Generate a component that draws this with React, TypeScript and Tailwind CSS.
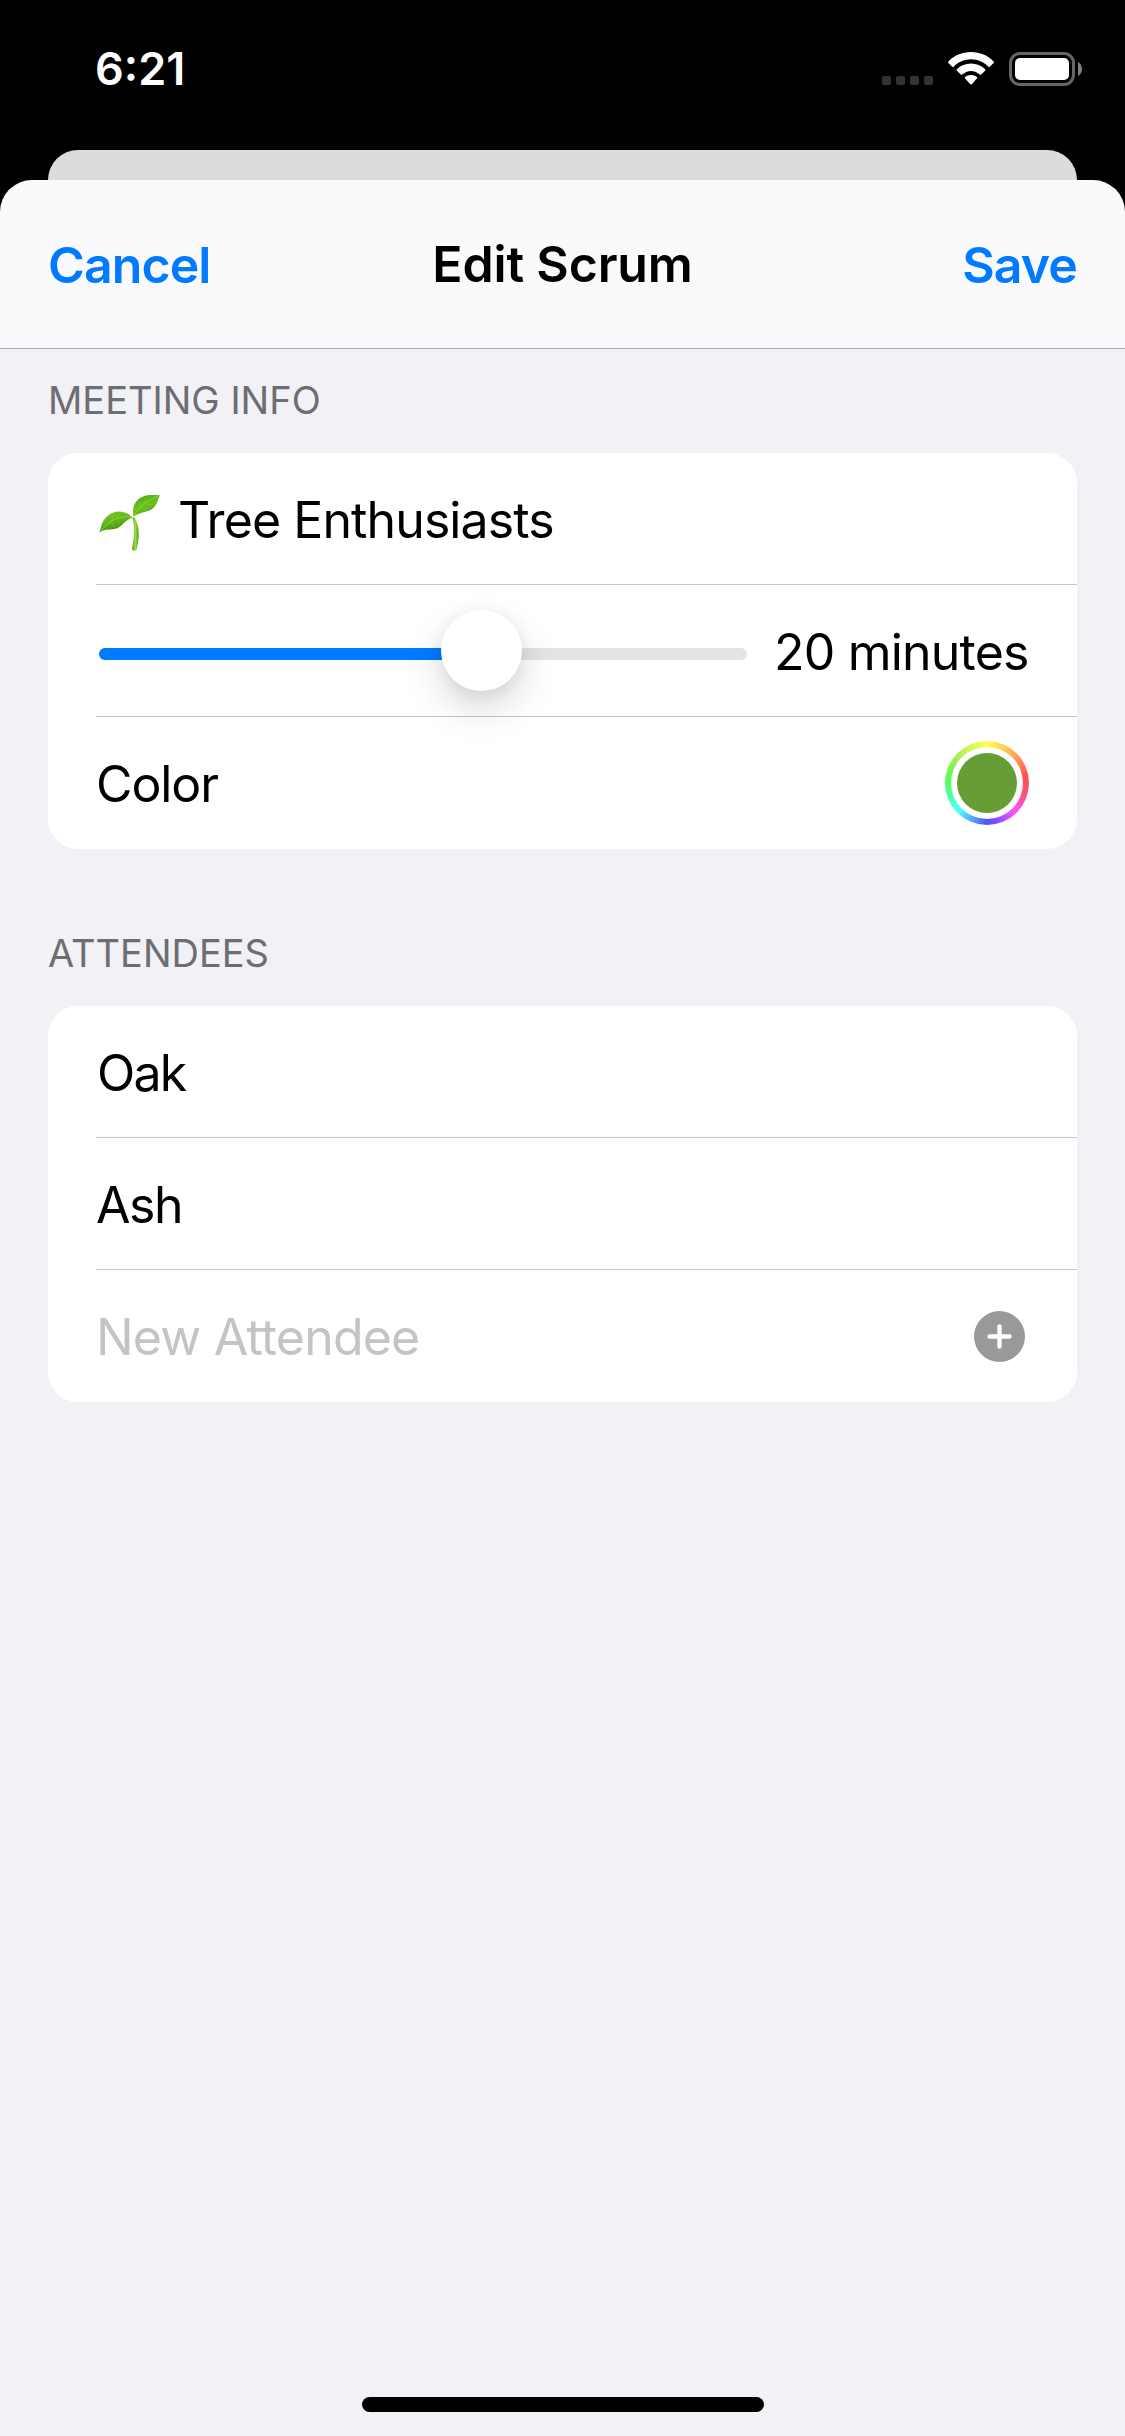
import type { ReactNode } from "react";

function StatusBar() {
  return (
    <div className="flex h-[137px] items-center justify-between pl-[95px] pr-[43px]">
      <span className="text-[45px] leading-none font-semibold text-white">6:21</span>
      <div className="flex items-center">
        <div className="mt-[24px] mr-[15px] flex gap-[5px]">
          {[0, 1, 2, 3].map((i) => (
            <span key={i} className="size-[9px] rounded-[2px] bg-[#333333]" />
          ))}
        </div>
        <svg className="mr-[15px] h-[34px] w-[46px]" viewBox="0 0 46 34" fill="#fff">
          <path d="M23 0C32 0 40 3.5 45.6 9.4C46.1 9.9 46.1 10.5 45.6 11L41.8 14.7C41.3 15.1 40.8 15.1 40.4 14.7C35.8 10 29.6 7.3 23 7.3S10.2 10 5.6 14.7C5.2 15.1 4.7 15.1 4.2 14.7L.4 11C-.1 10.5-.1 9.9.4 9.4C6 3.5 14 0 23 0Z" />
          <path d="M23 11.5C28.5 11.5 33.4 13.6 37.1 17.2C37.6 17.7 37.6 18.3 37.1 18.8L33.2 22.6C32.8 23 32.3 23 31.8 22.6C29.4 20.3 26.3 18.9 23 18.9S16.6 20.3 14.2 22.6C13.7 23 13.2 23 12.8 22.6L8.9 18.8C8.4 18.3 8.4 17.7 8.9 17.2C12.6 13.6 17.5 11.5 23 11.5Z" />
          <path d="M23 23C25.3 23 27.3 23.8 28.9 25.1C29.4 25.6 29.4 26.1 28.9 26.6L23.7 32.2C23.2 32.7 22.8 32.7 22.3 32.2L17.1 26.6C16.6 26.1 16.6 25.6 17.1 25.1C18.7 23.8 20.7 23 23 23Z" />
        </svg>
        <div className="h-[34px] w-[66px] rounded-[11px] border-3 border-[#666666] p-[3px]">
          <div className="h-full w-full rounded-[5px] bg-white" />
        </div>
        <svg className="ml-[3px] h-[14px] w-1" viewBox="0 0 4 14" fill="#808080">
          <path d="M0 0C2.4 1.2 4 3.8 4 7S2.4 12.8 0 14Z" />
        </svg>
      </div>
    </div>
  );
}

function Seedling() {
  return (
    <svg className="mt-[9px] mr-[10px] -ml-1 size-[76px]" viewBox="0 0 228 228">
      <defs>
        <linearGradient id="leafLeft" x1="0" y1="0" x2="0.4" y2="1">
          <stop offset="0" stopColor="#7fce28" />
          <stop offset="0.55" stopColor="#5fb618" />
          <stop offset="1" stopColor="#3d8c0d" />
        </linearGradient>
        <linearGradient id="leafRight" x1="0.2" y1="0" x2="0.7" y2="1">
          <stop offset="0" stopColor="#4fab11" />
          <stop offset="0.5" stopColor="#6cc01d" />
          <stop offset="1" stopColor="#4a9c10" />
        </linearGradient>
        <linearGradient id="stem" x1="0" y1="0" x2="1" y2="0">
          <stop offset="0" stopColor="#4a9a0d" />
          <stop offset="0.5" stopColor="#9be03f" />
          <stop offset="1" stopColor="#4a9e0e" />
        </linearGradient>
      </defs>
      <path d="M121 98C128 115 129 146 120 192C123 199 131 199 134 193C144 155 142 120 127 97Z" fill="url(#stem)" />
      <path d="M122 98C102 75 70 74 50 90C35 102 28 117 26 130L22 143C35 132 48 135 68 132C91 127 95 105 122 98Z" fill="url(#leafLeft)" />
      <path d="M125 95C119 68 128 45 152 35C166 29 184 30 204 31C197 42 198 56 184 69C168 84 143 80 125 95Z" fill="url(#leafRight)" />
      <path d="M120 97C87 91 55 101 28 137" fill="none" stroke="#a5df55" strokeWidth="2" />
      <path d="M126 93C140 65 163 47 199 33" fill="none" stroke="#a5df55" strokeWidth="2" />
      <path d="M58 107L66 91M75 99L82 86M57 110L68 126M76 101L84 117M142 68L143 48M157 55L162 38M143 69L163 75M160 54L181 61" stroke="#8bcf3c" strokeWidth="1.5" />
    </svg>
  );
}

function Section({ title, children }: { title: string; children: ReactNode }) {
  return (
    <section>
      <h2 className="flex h-[104px] items-center pb-[2px] text-[38px] leading-none text-[#6d6d72]">
        {title}
      </h2>
      <div className="rounded-[30px] bg-white pl-12">{children}</div>
    </section>
  );
}

function Row({ last = false, children }: { last?: boolean; children: ReactNode }) {
  return (
    <div className={last ? "flex h-[132px] items-center" : "flex h-[132px] items-center border-b border-[#c6c6c8]"}>
      {children}
    </div>
  );
}

function Slider() {
  return (
    <div className="relative ml-[3px] flex h-[81px] w-[648px] items-center">
      <div className="mt-[7px] h-3 w-full overflow-hidden rounded-full bg-[#e4e4e6]">
        <div className="h-full w-[382px] bg-[#007aff]" />
      </div>
      <div className="absolute top-0 left-[342px] size-[81px] rounded-full bg-white shadow-[0_18px_39px_rgba(0,0,0,0.15),0_3px_18px_rgba(0,0,0,0.07)]" />
    </div>
  );
}

function ColorWell() {
  return (
    <div className="mr-12 ml-auto size-[84px] rounded-full bg-[conic-gradient(#ffff55_0deg,#ffa855_45deg,#ff5050_80deg,#ff5078_105deg,#ff50ff_135deg,#5050ff_180deg,#50ffff_225deg,#50ff50_275deg,#a8ee55_310deg,#ffff55_360deg)] p-[6px]">
      <div className="h-full w-full rounded-full bg-white p-[6px]">
        <div className="h-full w-full rounded-full bg-[#669d34]" />
      </div>
    </div>
  );
}

export default function App() {
  return (
    <div className="flex h-[2436px] w-[1125px] flex-col overflow-hidden bg-black font-['Inter',sans-serif] text-[50px] leading-none text-black">
      <StatusBar />
      <div className="mx-12 mt-[13px] h-[30px] rounded-t-[30px] bg-[#dcdcdd]" />
      <main className="flex flex-1 flex-col">
        <header className="grid h-[169px] grid-cols-3 items-center rounded-t-[32px] border-b border-[#a9a9ae] bg-[#fafafd] px-12 font-semibold">
          <button className="mt-[2px] justify-self-start leading-none tracking-[-0.9px] text-[#007aff]">Cancel</button>
          <h1 className="justify-self-center tracking-[-0.15px]">Edit Scrum</h1>
          <button className="mt-[2px] justify-self-end leading-none tracking-[-0.9px] text-[#007aff]">Save</button>
        </header>
        <div className="flex flex-1 flex-col gap-[53px] bg-[#f2f1f6] px-12">
          <Section title="MEETING INFO">
            <Row>
              <Seedling />
              <span className="mt-[2px] tracking-[-0.9px]">Tree Enthusiasts</span>
            </Row>
            <Row>
              <Slider />
              <span className="mt-[2px] ml-[27px] tracking-[-0.79px] whitespace-nowrap">20 minutes</span>
            </Row>
            <Row last>
              <span className="mt-[2px] tracking-[-1.1px]">Color</span>
              <ColorWell />
            </Row>
          </Section>
          <Section title="ATTENDEES">
            <Row>
              <span className="mt-[2px] ml-px tracking-[-1.8px]">Oak</span>
            </Row>
            <Row>
              <span className="mt-[2px] tracking-[-1.44px]">Ash</span>
            </Row>
            <Row last>
              <span className="mt-[2px] tracking-[-0.8px] text-[#c4c4c6]">New Attendee</span>
              <svg className="mt-px mr-[52px] ml-auto size-[51px]" viewBox="0 0 51 51">
                <circle cx="25.5" cy="25.5" r="25.5" fill="#999999" />
                <path d="M25.5 15.5V35.5M15.5 25.5H35.5" stroke="#fff" strokeWidth="4.4" strokeLinecap="round" />
              </svg>
            </Row>
          </Section>
          <div className="mt-auto mb-6 h-[15px] w-[402px] self-center rounded-full bg-black" />
        </div>
      </main>
    </div>
  );
}
